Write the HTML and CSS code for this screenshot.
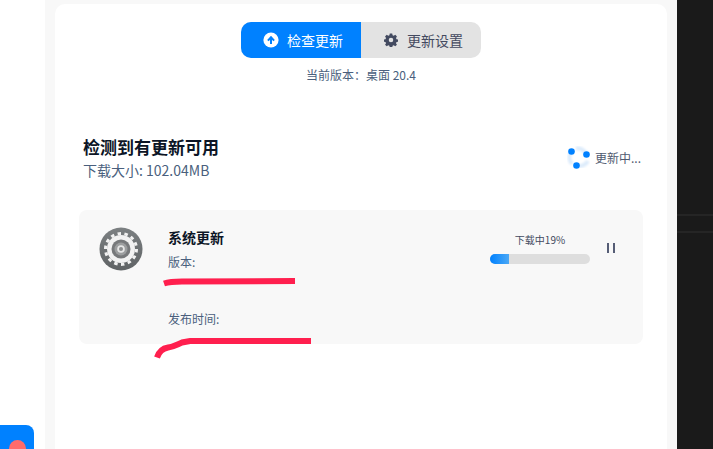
FILE: index.html
```html
<!DOCTYPE html>
<html lang="zh-CN">
<head>
  <meta charset="UTF-8" />
  <title>更新</title>
  <link rel="stylesheet" href="styles.css">
</head>
<body>
  <div class="left-side">
    <div class="float-btn"><span class="float-dot"></span></div>
  </div>

  <div class="middle">
    <div class="panel">
      <div class="tabs">
        <div class="tab tab-active">
          <svg class="tab-icon" viewBox="0 0 16 16"><circle cx="8" cy="8" r="7.6" fill="#fff"/><path d="M8 12V6M4.900 8.600 8 5.300l3.100 3.300" fill="none" stroke="#0081ff" stroke-width="2"/></svg>
          <span>检查更新</span>
        </div>
        <div class="tab tab-settings">
          <svg class="tab-icon tab-icon-small" viewBox="0 0 16 16"><path fill="#434a60" fill-rule="evenodd" d="M6.600 1h2.800l.4 2 1.300.6 1.800-1.100 1.900 2-1.100 1.700.6 1.300 2 .4v2.400l-2 .5-.6 1.300 1.100 1.700-1.900 1.900-1.800-1.100-1.300.6-.4 2H6.600l-.4-2-1.300-.6-1.800 1.100-1.900-1.900 1.100-1.700-.6-1.300-2-.5V7.900l2-.4.6-1.300-1.100-1.700 1.900-2 1.800 1.100 1.300-.6zM8 5.900a2.600 2.600 0 1 0 0 5.200 2.600 2.600 0 0 0 0-5.200z" transform="translate(0 -.5)"/></svg>
          <span>更新设置</span>
        </div>
      </div>
      <p class="version">当前版本：桌面 20.4</p>

      <div class="head-row">
        <div>
          <h2 class="head-title">检测到有更新可用</h2>
          <p class="head-size">下载大小: 102.04MB</p>
        </div>
        <div class="updating">
          <svg class="spinner" viewBox="0 0 24 24">
            <defs><filter id="soft"><feGaussianBlur stdDeviation="1"/></filter></defs>
            <g fill="none" stroke-width="4" stroke="#dcebfb" filter="url(#soft)">
              <path d="M4.500 5.500A10 10 0 0 0 5 18"/>
              <path d="M19.500 8.500A9.500 9.500 0 0 0 9 2.500"/>
              <path d="M9.500 19.500A9.500 9.500 0 0 0 21 15"/>
            </g>
            <circle cx="4.500" cy="5.500" r="3.300" fill="#0081ff"/>
            <circle cx="19.500" cy="8.500" r="3.300" fill="#0081ff"/>
            <circle cx="9.500" cy="19.500" r="3.300" fill="#0081ff"/>
          </svg>
          <span>更新中...</span>
        </div>
      </div>

      <div class="card">
        <svg class="app-icon" viewBox="0 0 44 44">
          <defs>
            <linearGradient id="disc" x1="0" y1="0" x2="0" y2="1">
              <stop offset="0" stop-color="#7c8082"/>
              <stop offset="1" stop-color="#5f6365"/>
            </linearGradient>
          </defs>
          <circle cx="22" cy="22" r="21.500" fill="url(#disc)"/>
          <circle cx="22" cy="22" r="14" fill="#f2f2f2"/>
          <circle class="gear-teeth" cx="22" cy="22" r="15.500" pathLength="28"/>
          <circle cx="22" cy="22" r="9.500" fill="#77797b"/>
          <circle cx="22" cy="22" r="6.500" fill="#9c9e9f"/>
          <circle cx="22" cy="22" r="3.800" fill="#e6e6e6"/>
          <circle cx="22" cy="22" r="2" fill="#8c8e8f"/>
        </svg>
        <div class="card-info">
          <div class="card-name">系统更新</div>
          <div class="card-meta">版本:</div>
          <div class="card-meta card-date">发布时间:</div>
        </div>
        <div class="progress">
          <div class="progress-label">下载中19%</div>
          <div class="progress-track"><div class="progress-bar" style="width: 19%"></div></div>
        </div>
        <div class="pause"><i></i><i></i></div>
      </div>

      <!-- 涂抹 -->
      <svg class="scribble" viewBox="0 0 713 449" width="713" height="449">
        <path d="M164 283.500C170 281.500 174 281.500 182 281.500L295 281" />
        <path d="M157 357.500C159 351.500 162 348.500 168 347.500C174 346.500 177 344.500 182 342.500L190 341L311 341" />
      </svg>
    </div>
  </div>

  <div class="right-side">
    <div class="right-row"></div>
  </div>
</body>
</html>
```

FILE: styles.css
```css
* {
  margin: 0;
  padding: 0;
  box-sizing: border-box;
}
body {
  font-family: 'Noto Sans CJK SC', 'Noto Sans', sans-serif;
  width: 713px;
  height: 449px;
  overflow: hidden;
  display: flex;
  background: #fff;
  color: #434a60;
}

/* Colonnes */
.left-side {
  width: 45px;
  height: 100%;
  background: #fff;
  position: relative;
}
.float-btn {
  position: absolute;
  left: 0;
  top: 425px;
  width: 34px;
  height: 40px;
  background: #0081ff;
  border-radius: 0 8px 8px 0;
}
.float-dot {
  position: absolute;
  left: 9px;
  top: 15px;
  width: 17px;
  height: 17px;
  border-radius: 50%;
  background: #ff6b6b;
}
.middle {
  width: 632px;
  height: 100%;
  background: #f8f8f8;
  padding: 4px 10px 0;
}
.right-side {
  width: 36px;
  height: 100%;
  background: #1a1a1a;
  padding-top: 214px;
}
.right-row {
  height: 19px;
  border-top: 2px solid #252525;
  border-bottom: 2px solid #252525;
}

.panel {
  position: relative;
  width: 612px;
  height: 445px;
  background: #fff;
  border-radius: 10px 10px 0 0;
  display: flex;
  flex-direction: column;
  align-items: center;
  padding: 18px 24px 0;
}

/* Onglets */
.tabs {
  display: flex;
  width: 240px;
  height: 36px;
  border-radius: 10px;
  overflow: hidden;
  background: #e3e3e3;
  font-size: 14px;
}
.tab {
  width: 120px;
  display: flex;
  justify-content: center;
  align-items: center;
  gap: 8px;
  padding-left: 4px;
}
.tab-active {
  background: #0081ff;
  color: #fff;
}
.tab-settings {
  gap: 9px;
  padding-left: 5px;
}
.tab-icon {
  width: 16px;
  height: 16px;
}
.tab-icon-small {
  width: 14px;
  height: 14px;
}
.version {
  margin-top: 8px;
  font-size: 12px;
  line-height: 17px;
  color: #4a5f7d;
}

/* En-tête */
.head-row {
  align-self: stretch;
  display: flex;
  justify-content: space-between;
  align-items: center;
  margin: 52px 2px 0 4px;
}
.head-title {
  font-size: 17px;
  line-height: 24px;
  font-weight: 700;
  color: #0c1526;
}
.head-size {
  margin-top: 1px;
  font-size: 14px;
  line-height: 20px;
  color: #4a5f7d;
}
.updating {
  display: flex;
  align-items: center;
  gap: 4px;
  font-size: 12px;
  color: #4f5a70;
}
.spinner {
  width: 24px;
  height: 24px;
}

/* Carte */
.card {
  align-self: stretch;
  height: 134px;
  margin-top: 30px;
  background: #f8f8f8;
  border-radius: 8px;
  display: flex;
  align-items: flex-start;
  padding: 16px 28px 0 20px;
}
.app-icon {
  width: 44px;
  height: 44px;
  margin-top: 1px;
}
.gear-teeth {
  fill: none;
  stroke: #f2f2f2;
  stroke-width: 3px;
  stroke-dasharray: 1 1;
}
.card-info {
  flex: 1;
  margin-left: 25px;
}
.card-name {
  font-size: 14px;
  line-height: 23px;
  font-weight: 700;
  color: #0c1526;
}
.card-meta {
  margin-top: 4px;
  font-size: 12px;
  line-height: 18px;
  color: #4a5f7d;
}
.card-date {
  margin-top: 39px;
}
.progress {
  width: 100px;
  margin-top: 7px;
  text-align: center;
}
.progress-label {
  font-size: 10px;
  line-height: 14px;
  color: #434a60;
}
.progress-track {
  height: 10px;
  margin-top: 7px;
  border-radius: 5px;
  background: #dedede;
  overflow: hidden;
}
.progress-bar {
  height: 100%;
  background: linear-gradient(90deg, #0081ff, #4ba8f5);
}
.pause {
  display: flex;
  gap: 4px;
  margin: 17px 0 0 17px;
  width: 8px;
}
.pause i {
  flex: none;
  width: 2px;
  height: 10px;
  background: #565d76;
}

/* Traits rouges par-dessus le contenu */
.scribble {
  position: absolute;
  left: -55px;
  top: -4px;
  fill: none;
  stroke: #ff1f4e;
  stroke-width: 6px;
}
```
